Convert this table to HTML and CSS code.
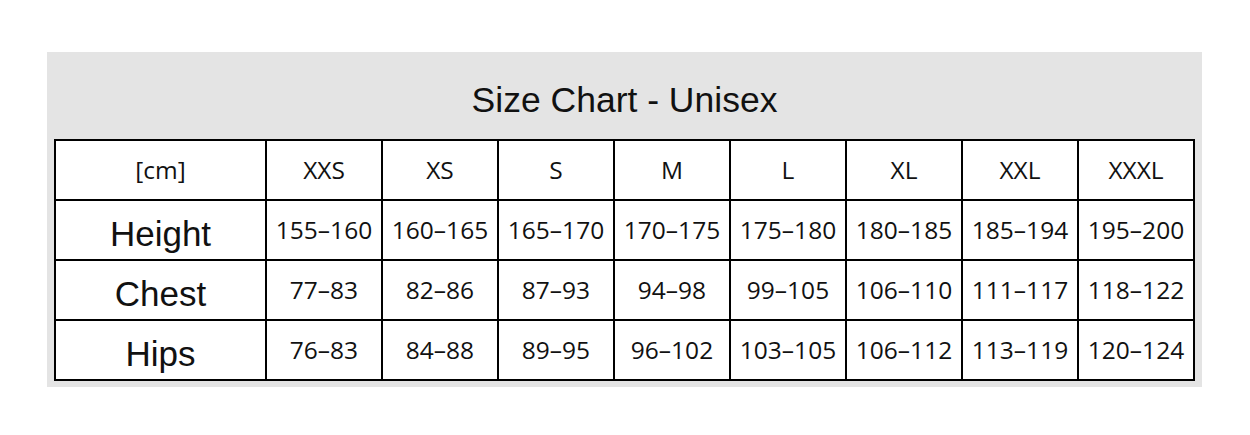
FILE: index.html
```html
<!DOCTYPE html>
<html lang="en">
<head>
<meta charset="utf-8">
<title>Size Chart - Unisex</title>
<link rel="stylesheet" href="styles.css">
</head>
<body>
<section class="panel">
  <h1 class="title">Size Chart - Unisex</h1>
  <div class="chart">
    <div class="cell head">[cm]</div>
    <div class="cell head">XXS</div>
    <div class="cell head">XS</div>
    <div class="cell head">S</div>
    <div class="cell head">M</div>
    <div class="cell head">L</div>
    <div class="cell head">XL</div>
    <div class="cell head">XXL</div>
    <div class="cell head">XXXL</div>

    <div class="cell label">Height</div>
    <div class="cell">155–160</div>
    <div class="cell">160–165</div>
    <div class="cell">165–170</div>
    <div class="cell">170–175</div>
    <div class="cell">175–180</div>
    <div class="cell">180–185</div>
    <div class="cell">185–194</div>
    <div class="cell">195–200</div>

    <div class="cell label">Chest</div>
    <div class="cell">77–83</div>
    <div class="cell">82–86</div>
    <div class="cell">87–93</div>
    <div class="cell">94–98</div>
    <div class="cell">99–105</div>
    <div class="cell">106–110</div>
    <div class="cell">111–117</div>
    <div class="cell">118–122</div>

    <div class="cell label">Hips</div>
    <div class="cell">76–83</div>
    <div class="cell">84–88</div>
    <div class="cell">89–95</div>
    <div class="cell">96–102</div>
    <div class="cell">103–105</div>
    <div class="cell">106–112</div>
    <div class="cell">113–119</div>
    <div class="cell">120–124</div>
  </div>
</section>
</body>
</html>
```

FILE: styles.css
```css
html, body {
  margin: 0;
  padding: 0;
  background: #ffffff;
}

.panel {
  margin: 52px 0 0 47px;
  width: 1155px;
  box-sizing: border-box;
  padding: 0 7px 6px 7px;
  background: #e4e4e4;
}

.title {
  margin: 0;
  height: 87px;
  box-sizing: border-box;
  padding-top: 28px;
  font-family: "Liberation Sans", Arial, sans-serif;
  font-weight: normal;
  font-size: 35.5px;
  line-height: 40px;
  color: #111111;
  text-align: center;
}

.chart {
  display: grid;
  grid-template-columns: 211px repeat(8, 116px);
  grid-auto-rows: 60px;
  border-left: 2px solid #000;
  border-top: 2px solid #000;
  background: #ffffff;
  width: max-content;
}

.cell {
  box-sizing: border-box;
  border-right: 2px solid #000;
  border-bottom: 2px solid #000;
  font-family: "Open Sans", "Noto Sans", sans-serif;
  font-size: 24.5px;
  line-height: 58px;
  color: #111111;
  text-align: center;
  white-space: nowrap;
}

.label {
  font-family: "Liberation Sans", Arial, sans-serif;
  font-size: 35px;
  padding-top: 8px;
  line-height: 50px;
}
```
